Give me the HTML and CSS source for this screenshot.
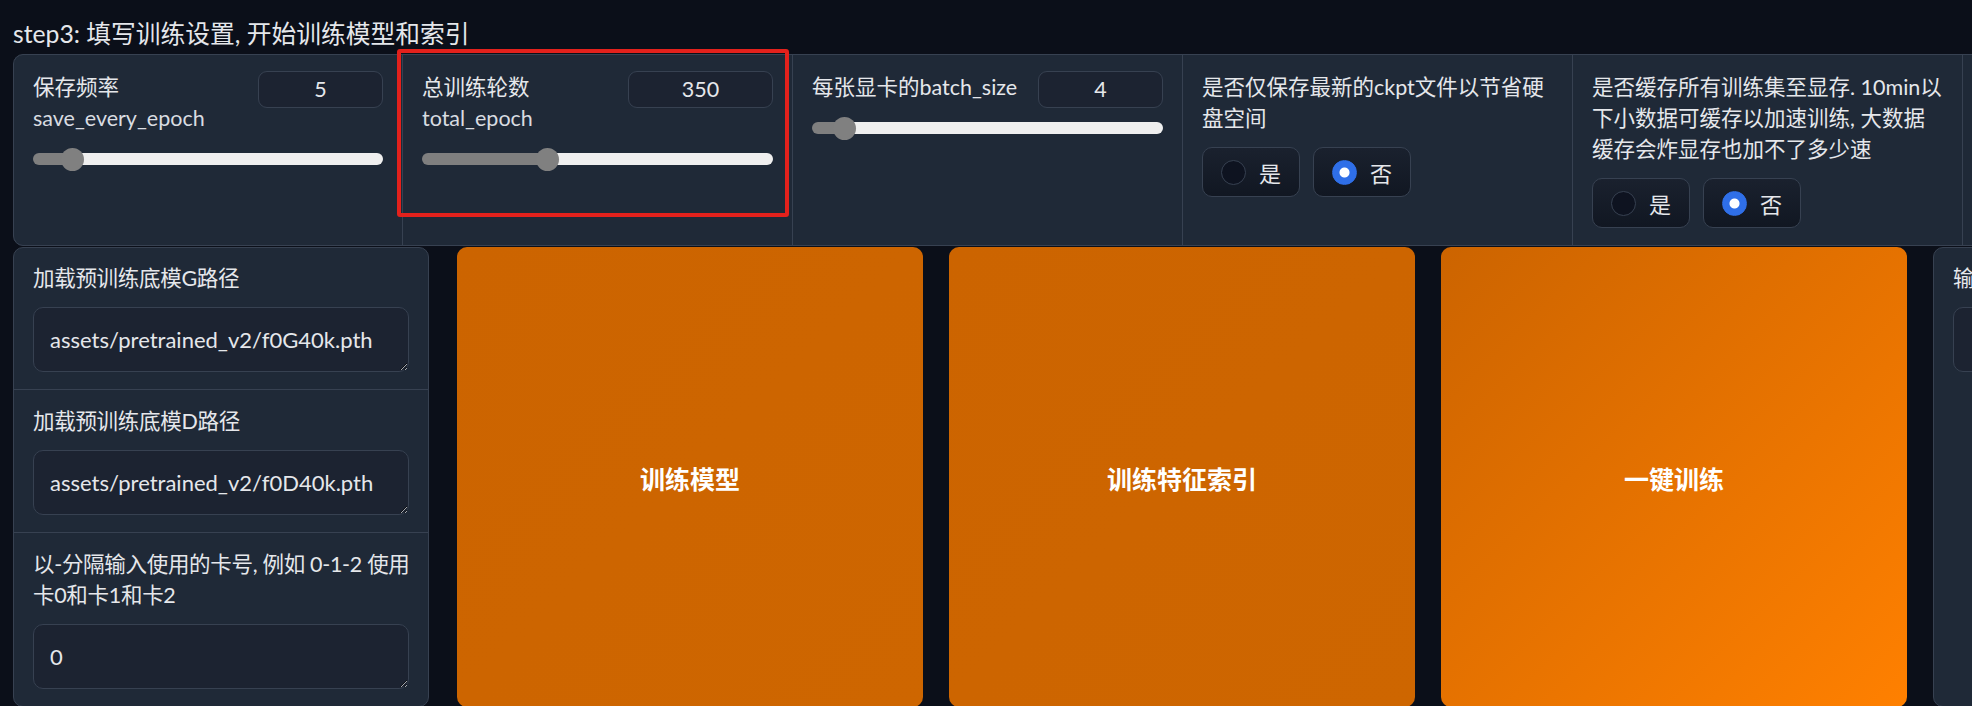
FILE: index.html
```html
<!DOCTYPE html>
<html lang="zh-CN">
<head>
<meta charset="utf-8">
<title>step3</title>
<link rel="stylesheet" href="styles.css">
</head>
<body>
<div class="page">
  <h2 class="title">step3: 填写训练设置, 开始训练模型和索引</h2>

  <div class="settings">
    <div class="cell">
      <div class="head">
        <div class="label-block">
          <div class="label">保存频率</div>
          <div class="info">save_every_epoch</div>
        </div>
        <div class="num">5</div>
      </div>
      <div class="range" style="--p:0.085"><div class="thumb"></div></div>
    </div>

    <div class="cell">
      <div class="head">
        <div class="label-block">
          <div class="label">总训练轮数</div>
          <div class="info">total_epoch</div>
        </div>
        <div class="num wide">350</div>
      </div>
      <div class="range" style="--p:0.349"><div class="thumb"></div></div>
    </div>

    <div class="cell">
      <div class="head">
        <div class="label-block">
          <div class="label">每张显卡的batch_size</div>
        </div>
        <div class="num">4</div>
      </div>
      <div class="range tight" style="--p:0.065"><div class="thumb"></div></div>
    </div>

    <div class="cell">
      <div class="label">是否仅保存最新的ckpt文件以节省硬盘空间</div>
      <div class="radios">
        <div class="radio"><span class="dot"></span><span>是</span></div>
        <div class="radio"><span class="dot on"></span><span>否</span></div>
      </div>
    </div>

    <div class="cell">
      <div class="label">是否缓存所有训练集至显存. 10min以下小数据可缓存以加速训练, 大数据缓存会炸显存也加不了多少速</div>
      <div class="radios">
        <div class="radio"><span class="dot"></span><span>是</span></div>
        <div class="radio"><span class="dot on"></span><span>否</span></div>
      </div>
    </div>

    <div class="cell"></div>
  </div>

  <div class="bottom">
    <div class="stack">
      <div class="field">
        <div class="label">加载预训练底模G路径</div>
        <textarea class="text" readonly>assets/pretrained_v2/f0G40k.pth</textarea>
      </div>
      <div class="field">
        <div class="label">加载预训练底模D路径</div>
        <textarea class="text" readonly>assets/pretrained_v2/f0D40k.pth</textarea>
      </div>
      <div class="field">
        <div class="label">以-分隔输入使用的卡号, 例如 0-1-2 使用卡0和卡1和卡2</div>
        <textarea class="text" readonly>0</textarea>
      </div>
    </div>

    <button class="btn">训练模型</button>
    <button class="btn">训练特征索引</button>
    <button class="btn hot">一键训练</button>

    <div class="output">
      <div class="label">输出信息</div>
      <textarea class="text" readonly></textarea>
    </div>
  </div>

  <div class="annot"></div>
</div>
</body>
</html>
```

FILE: styles.css
```css
* {
  box-sizing: border-box;
}

html,
body {
  margin: 0;
  padding: 0;
  background: #0b0f19;
  overflow: hidden;
}

body {
  width: 1972px;
  height: 706px;
  font-family: Lato, "Noto Sans CJK SC", sans-serif;
  color: #e5e7eb;
  color-scheme: dark;
}

.page {
  position: relative;
  padding-left: 13px;
}

.title {
  margin: 0;
  padding-top: 18px;
  height: 54px;
  font-size: 24.75px;
  font-weight: 400;
  line-height: 32px;
  color: #e5e7eb;
  white-space: nowrap;
}

/* ---------- settings row ---------- */
.settings {
  display: flex;
  gap: 1px;
  width: 2400px;
  height: 192px;
  background: #374151;
  border: 1px solid #374151;
  border-radius: 10px;
  overflow: hidden;
}

.cell {
  flex: 0 0 389px;
  background: #1f2937;
  padding: 17px 19px;
}

.cell:first-child {
  flex-basis: 388px;
}

.head {
  display: flex;
  justify-content: space-between;
  align-items: flex-start;
}

.label,
.info {
  font-size: 21.5px;
  line-height: 31px;
  color: #e5e7eb;
}

.info {
  color: #d9dce1;
}

.num {
  flex: 0 0 125px;
  height: 37px;
  margin-top: -1px;
  border: 1px solid #374151;
  border-radius: 9px;
  background: #1c2331;
  text-align: center;
  font-size: 21.5px;
  line-height: 35px;
  color: #e5e7eb;
}

.num.wide {
  flex-basis: 145px;
}

.range {
  position: relative;
  margin-top: 19px;
  height: 12px;
  border-radius: 6px;
  background: linear-gradient(to right,
      #7f7f7f calc(var(--p) * (100% - 23px) + 11.5px),
      #efefef 0);
}

.range.tight {
  margin-top: 14px;
}

.thumb {
  position: absolute;
  top: -5.5px;
  left: calc(var(--p) * (100% - 23px));
  width: 23px;
  height: 23px;
  border-radius: 50%;
  background: #808080;
}

.radios {
  display: flex;
  gap: 13px;
  margin-top: 13px;
}

.radio {
  display: flex;
  align-items: center;
  gap: 13px;
  height: 50px;
  padding: 0 18px;
  border: 1px solid #374151;
  border-radius: 10px;
  background: linear-gradient(to top, #111722, #1a212e);
  font-size: 22px;
  color: #e5e7eb;
}

.dot {
  width: 25px;
  height: 25px;
  border-radius: 50%;
  border: 1px solid #374151;
  background: #0e1320;
}

.dot.on {
  border-color: #2f6fe8;
  background: radial-gradient(circle, #ffffff 0 4.5px, #2f6fe8 5.5px);
}

/* ---------- bottom row ---------- */
.bottom {
  display: flex;
  margin-top: 1px;
  height: 460px;
}

.stack {
  flex: 0 0 416px;
  margin-right: 28px;
  display: flex;
  flex-direction: column;
  border: 1px solid #374151;
  border-radius: 10px;
  background: #1f2937;
  overflow: hidden;
}

.field {
  padding: 16px 19px 17px;
  border-top: 1px solid #374151;
}

.field:first-child {
  padding-top: 15px;
  border-top: none;
}

.field .label {
  letter-spacing: -0.3px;
  margin-right: -4px;
}

.text {
  display: block;
  width: 100%;
  height: 65px;
  margin-top: 13px;
  padding: 16px 16px;
  border: 1px solid #374151;
  border-radius: 10px;
  background: #1c2331;
  color: #e5e7eb;
  font-family: Lato, "Noto Sans CJK SC", sans-serif;
  font-size: 22px;
  line-height: 31px;
  resize: vertical;
  overflow: hidden;
  outline: none;
}

.btn {
  flex: 0 0 466px;
  margin-right: 26px;
  border: none;
  border-radius: 10px;
  background: linear-gradient(to bottom right, #cc6400, #ce6600);
  color: #ffffff;
  font-family: "Noto Sans CJK SC", sans-serif;
  font-size: 25px;
  font-weight: 700;
  padding: 2px 0 0;
}

.btn.hot {
  background: linear-gradient(to bottom right, #cc6400, #ff8000);
}

.output {
  flex: 0 0 500px;
  padding: 15px 19px;
  border: 1px solid #374151;
  border-radius: 10px;
  background: #1f2937;
}

.annot {
  position: absolute;
  left: 397px;
  top: 49px;
  width: 392px;
  height: 168px;
  border: 4px solid #e3211c;
  border-radius: 3px;
  pointer-events: none;
}
```
